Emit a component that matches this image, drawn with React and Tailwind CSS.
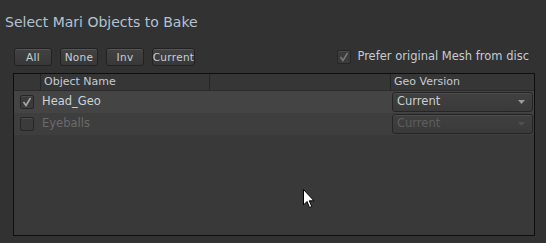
import React from 'react';

const Check = ({ checked, dim }) => (
  <div className="w-[14px] h-[14px] rounded-[2px] border border-[#262626] bg-[#3b3b3b] shadow-[inset_0_1px_0_#4a4a4a] flex items-center justify-center">
    {checked && (
      <svg width="10" height="10" viewBox="0 0 10 10">
        <path d="M1.5 5 L4 8.5 L8.5 1" fill="none" stroke={dim ? '#777' : '#a8a8a8'} strokeWidth="1.6" />
      </svg>
    )}
  </div>
);

const Combo = ({ disabled }) => (
  <div className="h-[20px] w-full rounded-[3px] border border-[#252525] bg-gradient-to-b from-[#404040] to-[#3a3a3a] shadow-[inset_0_1px_0_#4c4c4c] flex items-center justify-between pl-[4px] pr-[7px]">
    <span className={disabled ? 'text-[#5e5e5e]' : 'text-[#c9cfd6]'}>Current</span>
    <svg width="7" height="4" viewBox="0 0 7 4">
      <path d="M0 0 H7 L3.5 4 Z" fill={disabled ? '#505050' : '#9c9c9c'} />
    </svg>
  </div>
);

const Button = ({ label, width }) => (
  <button className={`${width} h-[18px] rounded-[3px] border border-[#222] bg-gradient-to-b from-[#424242] to-[#383838] shadow-[inset_0_1px_0_#555] text-[10.5px] tracking-[0.3px] text-[#c8d0d8] leading-none flex items-center justify-center`}>
    {label}
  </button>
);

const rows = [
  { name: 'Head_Geo', checked: true, disabled: false, bg: 'bg-[#444444]' },
  { name: 'Eyeballs', checked: false, disabled: true, bg: 'bg-[#3e3e3e]' },
];

export default function App() {
  return (
    <div className="relative w-[546px] h-[243px] bg-[#323232] overflow-hidden font-['DejaVu_Sans',sans-serif] text-[#c8ccd2]">
      {/* Title */}
      <div className="pt-[12px] pl-[5px] text-[14px] leading-[20px] text-[#b4c2d0]">Select Mari Objects to Bake</div>

      {/* Toolbar */}
      <div className="mt-[16px] h-[18px] flex items-center pl-[14px] pr-[17px]">
        <div className="flex gap-[8px]">
          <Button label="All" width="w-[38px]" />
          <Button label="None" width="w-[38px]" />
          <Button label="Inv" width="w-[38px]" />
          <Button label="Current" width="w-[43px]" />
        </div>
        <div className="ml-auto flex items-center gap-[6px] text-[11.5px] text-[#c4ccd4]">
          <Check checked dim />
          <span>Prefer original Mesh from disc</span>
        </div>
      </div>

      {/* Table */}
      <div className="mt-[7px] ml-[13px] w-[522px] h-[163px] border border-[#0e0e0e] bg-[#393939] text-[11.5px]">
        <div className="grid grid-cols-[26px_169px_181px_1fr] h-[17px] bg-[#363636] border-b border-[#2b2b2b] text-[11px] text-[#c4ccd4] leading-[16px]">
          <div />
          <div className="border-l border-[#262626] pl-[3px]">Object Name</div>
          <div className="border-l border-[#262626]" />
          <div className="border-l border-[#262626] pl-[3px]">Geo Version</div>
        </div>
        {rows.map((row) => (
          <div key={row.name} className={`grid grid-cols-[26px_350px_1fr] h-[22px] items-center ${row.bg}`}>
            <div className="flex justify-center">
              <Check checked={row.checked} />
            </div>
            <div className={`pl-[2px] ${row.disabled ? 'text-[#6b6b6b]' : 'text-[#cdd3da]'}`}>{row.name}</div>
            <div className="pl-[2px] pr-[1px]">
              <Combo disabled={row.disabled} />
            </div>
          </div>
        ))}
      </div>

      {/* Mouse cursor */}
      <svg className="absolute left-[303px] top-[189px]" width="13" height="21" viewBox="0 0 13 21">
        <path d="M0.5 0.5 L0.5 16 L4 12.5 L6.5 18.5 L8.8 17.5 L6.3 11.8 L11 11.8 Z" fill="#fff" stroke="#000" strokeWidth="1" />
      </svg>
    </div>
  );
}
